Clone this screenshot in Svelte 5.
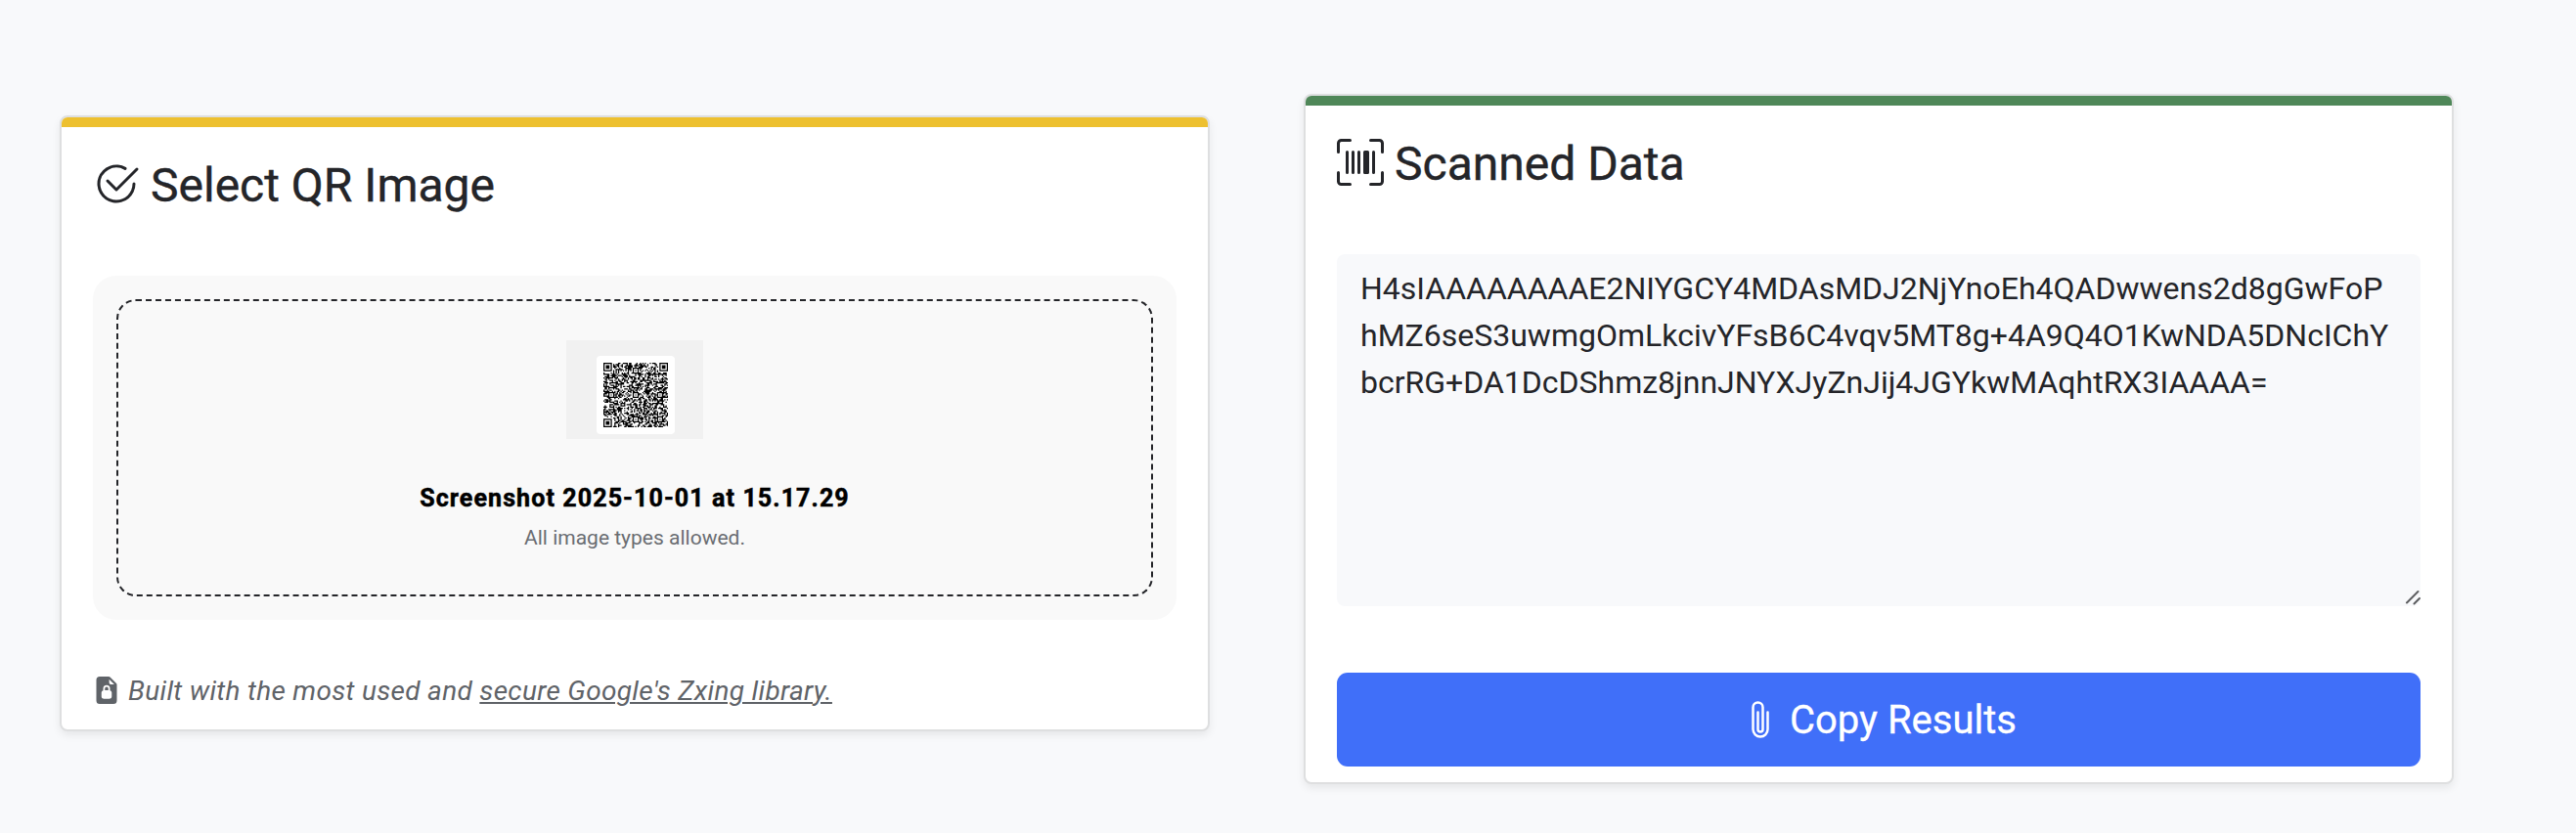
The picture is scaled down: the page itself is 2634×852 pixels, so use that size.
<script lang="ts">
  let fileName = 'Screenshot 2025-10-01 at 15.17.29'
  let result =
    'H4sIAAAAAAAAE2NIYGCY4MDAsMDJ2NjYnoEh4QADwwens2d8gGwFoPhMZ6seS3uwmgOmLkcivYFsB6C4vqv5MT8g+4A9Q4O1KwNDA5DNcIChYbcrRG+DA1DcDShmz8jnnJNYXJyZnJij4JGYkwMAqhtRX3IAAAA='

  // QR version 9, error correction level M
  const SIZE = 53
  const BLOCKS = [36, 36, 36, 37, 37]
  const EC = 22
  const MASK = 5

  const isMasked = (x: number, y: number) => ((x * y) % 2) + ((x * y) % 3) === 0

  const multiply = (a: number, b: number) => {
    let z = 0
    for (let i = 7; i >= 0; i--) {
      z = (z << 1) ^ ((z >>> 7) * 0x11d)
      z ^= ((b >>> i) & 1) * a
    }
    return z
  }

  const divisor = () => {
    const poly = Array(EC).fill(0)
    poly[EC - 1] = 1
    let root = 1
    for (let i = 0; i < EC; i++) {
      for (let j = 0; j < EC; j++) {
        poly[j] = multiply(poly[j], root)
        if (j + 1 < EC) poly[j] ^= poly[j + 1]
      }
      root = multiply(root, 2)
    }
    return poly
  }

  const codewords = (value: string) => {
    const bytes = [...value].map((c) => c.charCodeAt(0))
    let bits = '0100' + bytes.length.toString(2).padStart(8, '0')
    for (const b of bytes) bits += b.toString(2).padStart(8, '0')
    bits += '0000'
    const data = bits.match(/.{8}/g).map((b) => parseInt(b, 2))
    for (let pad = 0xec; data.length < 182; pad ^= 0xec ^ 0x11) data.push(pad)

    const div = divisor()
    const blocks = []
    let offset = 0
    for (const len of BLOCKS) {
      const block = data.slice(offset, offset + len)
      offset += len
      const rem = Array(EC).fill(0)
      for (const b of block) {
        const factor = b ^ rem.shift()
        rem.push(0)
        div.forEach((d, i) => (rem[i] ^= multiply(d, factor)))
      }
      blocks.push({ block, rem })
    }

    const out: number[] = []
    for (let i = 0; i < 37; i++)
      for (const b of blocks) if (i < b.block.length) out.push(b.block[i])
    for (let i = 0; i < EC; i++) for (const b of blocks) out.push(b.rem[i])
    return out
  }

  const qrPath = (value: string) => {
    const grid = Array.from({ length: SIZE }, () => Array(SIZE).fill(null))
    const set = (x: number, y: number, v: boolean) => {
      if (x >= 0 && y >= 0 && x < SIZE && y < SIZE) grid[y][x] = v
    }

    // timing lines
    for (let i = 0; i < SIZE; i++) {
      set(6, i, i % 2 === 0)
      set(i, 6, i % 2 === 0)
    }

    // finders
    for (const [cx, cy] of [[3, 3], [SIZE - 4, 3], [3, SIZE - 4]])
      for (let dy = -4; dy <= 4; dy++)
        for (let dx = -4; dx <= 4; dx++) {
          const d = Math.max(Math.abs(dx), Math.abs(dy))
          set(cx + dx, cy + dy, d !== 2 && d !== 4)
        }

    // alignment patterns
    for (const [cx, cy] of [[26, 6], [6, 26], [26, 26], [46, 26], [26, 46], [46, 46]])
      for (let dy = -2; dy <= 2; dy++)
        for (let dx = -2; dx <= 2; dx++)
          set(cx + dx, cy + dy, Math.max(Math.abs(dx), Math.abs(dy)) !== 1)

    // version
    for (let i = 0; i < 18; i++) {
      const bit = ((0x09a99 >>> i) & 1) === 1
      const a = SIZE - 11 + (i % 3)
      const b = Math.floor(i / 3)
      set(a, b, bit)
      set(b, a, bit)
    }

    // format
    let rem = MASK
    for (let i = 0; i < 10; i++) rem = (rem << 1) ^ ((rem >>> 9) * 0x537)
    const format = ((MASK << 10) | rem) ^ 0x5412
    const f = (i: number) => ((format >>> i) & 1) === 1
    for (let i = 0; i < 6; i++) set(8, i, f(i))
    set(8, 7, f(6))
    set(8, 8, f(7))
    set(7, 8, f(8))
    for (let i = 9; i < 15; i++) set(14 - i, 8, f(i))
    for (let i = 0; i < 8; i++) set(SIZE - 1 - i, 8, f(i))
    for (let i = 8; i < 15; i++) set(8, SIZE - 15 + i, f(i))
    set(8, SIZE - 8, true)

    const data = codewords(value)
    let i = 0
    for (let right = SIZE - 1; right >= 1; right -= 2) {
      if (right === 6) right = 5
      for (let v = 0; v < SIZE; v++)
        for (let j = 0; j < 2; j++) {
          const x = right - j
          const y = ((right + 1) & 2) === 0 ? SIZE - 1 - v : v
          if (grid[y][x] !== null) continue
          const bit = ((data[i >>> 3] >>> (7 - (i & 7))) & 1) === 1
          i++
          grid[y][x] = bit !== isMasked(x, y)
        }
    }

    let d = ''
    grid.forEach((row, y) =>
      row.forEach((dark, x) => {
        if (dark) d += `M${x} ${y}h1v1h-1z`
      }),
    )
    return d
  }

  const copyResults = () => navigator.clipboard.writeText(result)
</script>

<main>
  <section class="card select">
    <h4>
      <svg width="48" height="48" viewBox="0 0 16 16" fill="currentColor">
        <path d="M2.5 8a5.5 5.5 0 0 1 8.25-4.764.5.5 0 0 0 .5-.866A6.5 6.5 0 1 0 14.5 8a.5.5 0 0 0-1 0 5.5 5.5 0 1 1-11 0z" />
        <path d="M15.354 3.354a.5.5 0 0 0-.708-.708L8 9.293 5.354 6.646a.5.5 0 1 0-.708.708l3 3a.5.5 0 0 0 .708 0l7-7z" />
      </svg>
      <span>Select QR Image</span>
    </h4>

    <div class="drop">
      <div class="drop-area">
        <div class="preview">
          <div class="qr">
            <svg viewBox="0 0 53 53"><path d={qrPath(result)} /></svg>
          </div>
        </div>
        <p class="file-name">{fileName}</p>
        <p class="hint">All image types allowed.</p>
      </div>
    </div>

    <p class="built">
      <svg width="28" height="28" viewBox="0 0 16 16" fill="currentColor">
        <path d="M7 6a1 1 0 0 1 2 0v1H7zM6 8.3c0-.042.02-.107.105-.175A.64.64 0 0 1 6.5 8h3a.64.64 0 0 1 .395.125c.085.068.105.133.105.175v2.4c0 .042-.02.107-.105.175A.64.64 0 0 1 9.5 11h-3a.64.64 0 0 1-.395-.125C6.02 10.807 6 10.742 6 10.7z" fill="none" />
        <path fill-rule="evenodd" d="M9.293 0H4a2 2 0 0 0-2 2v12a2 2 0 0 0 2 2h8a2 2 0 0 0 2-2V4.707A1 1 0 0 0 13.707 4L10 .293A1 1 0 0 0 9.293 0M9.5 3.5v-2l3 3h-2a1 1 0 0 1-1-1M10 7v1.076c.54.166 1 .597 1 1.224v2.4c0 .816-.781 1.3-1.5 1.3h-3c-.719 0-1.5-.484-1.5-1.3V9.3c0-.627.46-1.058 1-1.224V7a2 2 0 1 1 4 0M7 7v1h2V7a1 1 0 0 0-2 0" />
      </svg>
      <em>Built with the most used and <a href="#zxing">secure Google's Zxing library.</a></em>
    </p>
  </section>

  <section class="card scanned">
    <h4>
      <svg width="48" height="48" viewBox="0 0 16 16" fill="currentColor">
        <path d="M1.5 1a.5.5 0 0 0-.5.5v3a.5.5 0 0 1-1 0v-3A1.5 1.5 0 0 1 1.5 0h3a.5.5 0 0 1 0 1zM11 .5a.5.5 0 0 1 .5-.5h3A1.5 1.5 0 0 1 16 1.5v3a.5.5 0 0 1-1 0v-3a.5.5 0 0 0-.5-.5h-3a.5.5 0 0 1-.5-.5M.5 11a.5.5 0 0 1 .5.5v3a.5.5 0 0 0 .5.5h3a.5.5 0 0 1 0 1h-3A1.5 1.5 0 0 1 0 14.5v-3a.5.5 0 0 1 .5-.5m15 0a.5.5 0 0 1 .5.5v3a1.5 1.5 0 0 1-1.5 1.5h-3a.5.5 0 0 1 0-1h3a.5.5 0 0 0 .5-.5v-3a.5.5 0 0 1 .5-.5M3 4.5a.5.5 0 0 1 1 0v7a.5.5 0 0 1-1 0zm2 0a.5.5 0 0 1 1 0v7a.5.5 0 0 1-1 0zm2 0a.5.5 0 0 1 1 0v7a.5.5 0 0 1-1 0zm2 0a.5.5 0 0 1 .5-.5h1a.5.5 0 0 1 .5.5v7a.5.5 0 0 1-.5.5h-1a.5.5 0 0 1-.5-.5zm3 0a.5.5 0 0 1 1 0v7a.5.5 0 0 1-1 0z" />
      </svg>
      <span>Scanned Data</span>
    </h4>

    <div class="output">
      <textarea bind:value={result} spellcheck="false" aria-label="Scanned Data"></textarea>
      <svg class="grip" width="18" height="18" viewBox="0 0 18 18">
        <path d="M4 14.5L15.5 3M11.5 15.5L17 10" />
      </svg>
    </div>

    <button on:click={copyResults}>
      <svg width="40" height="40" viewBox="0 0 16 16" fill="currentColor">
        <path d="M4.5 3a2.5 2.5 0 0 1 5 0v9a1.5 1.5 0 0 1-3 0V5a.5.5 0 0 1 1 0v7a.5.5 0 0 0 1 0V3a1.5 1.5 0 1 0-3 0v9a2.5 2.5 0 0 0 5 0V5a.5.5 0 0 1 1 0v7a3.5 3.5 0 1 1-7 0z" />
      </svg>
      <span>Copy Results</span>
    </button>
  </section>
</main>

<style>
  :global(body) {
    background: #f8f9fb;
    font-family: Roboto, 'Liberation Sans', sans-serif;
    color: #242529;
  }

  main {
    display: flex;
    align-items: flex-start;
    gap: 96px;
    height: 852px;
    padding: 96px 0 0 61px;
    box-sizing: border-box;
  }

  .card {
    width: 1176px;
    box-sizing: border-box;
    padding: 0 32px 16px;
    background: #fff;
    border: 2px solid #dedfe0;
    border-radius: 8px;
    box-shadow: 0 4px 8px rgba(0, 0, 0, 0.075);
    overflow: hidden;
  }

  .card::before {
    content: '';
    display: block;
    height: 10px;
    margin: 0 -32px;
    background: #edc02f;
  }

  .select {
    height: 630px;
    margin-top: 22px;
  }

  .scanned {
    height: 706px;
  }

  .scanned::before {
    background: #4f8758;
  }

  h4 {
    display: flex;
    gap: 11px;
    height: 152px;
    margin: 0;
    padding-top: 34px;
    box-sizing: border-box;
    font-size: 48px;
    font-weight: 400;
    line-height: 51px;
    -webkit-text-stroke: 0.4px;
  }

  .drop {
    height: 352px;
    padding: 24px;
    box-sizing: border-box;
    background: #f9f9f9;
    border-radius: 24px;
  }

  .drop-area {
    display: flex;
    flex-direction: column;
    align-items: center;
    height: 304px;
    padding-top: 40px;
    box-sizing: border-box;
    border: 2px dashed #242529;
    border-radius: 20px;
  }

  .preview {
    display: flex;
    justify-content: center;
    width: 140px;
    height: 101px;
    padding: 16px 0 0 2px;
    box-sizing: border-box;
    background: #f1f1f1;
  }

  .qr {
    display: flex;
    align-items: center;
    justify-content: center;
    width: 80px;
    height: 80px;
    background: #fff;
    border-radius: 4px;
  }

  .qr svg {
    width: 66px;
    height: 66px;
  }

  .drop-area p {
    margin: 0;
  }

  .file-name {
    padding-top: 43px;
    font-size: 25px;
    font-weight: 700;
    line-height: 36px;
    letter-spacing: 1.1px;
    color: #000;
    -webkit-text-stroke: 0.5px;
  }

  .hint {
    padding-top: 6px;
    font-size: 21px;
    line-height: 32px;
    color: #6a6d72;
  }

  .built {
    display: flex;
    gap: 8px;
    margin: 0;
    padding-top: 58px;
    font-size: 28px;
    line-height: 29px;
    letter-spacing: 0.31px;
    color: #5f6368;
  }

  .built a {
    color: inherit;
    text-underline-offset: 2px;
    text-decoration-thickness: 2px;
  }

  .output {
    position: relative;
    height: 360px;
  }

  textarea {
    display: block;
    width: 100%;
    height: 100%;
    padding: 11px 24px;
    box-sizing: border-box;
    border: 0;
    border-radius: 8px;
    outline: 0;
    background: #f8f9fb;
    color: inherit;
    font-family: inherit;
    font-size: 32px;
    line-height: 48px;
    word-break: break-all;
    resize: none;
  }

  .grip {
    position: absolute;
    right: 0;
    bottom: 0;
    fill: none;
    stroke: #5c5d5f;
    stroke-width: 2;
    stroke-linecap: round;
  }

  button {
    display: flex;
    align-items: center;
    justify-content: center;
    gap: 10px;
    width: 100%;
    height: 96px;
    margin-top: 68px;
    padding: 0;
    border: 0;
    border-radius: 11px;
    background: #406ff9;
    color: #fff;
    font-family: inherit;
    font-size: 40px;
    -webkit-text-stroke: 0.3px;
    cursor: pointer;
  }
</style>
